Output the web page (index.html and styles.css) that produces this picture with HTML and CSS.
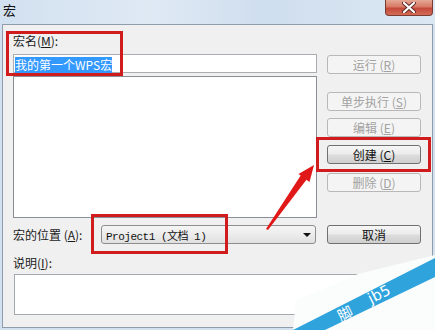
FILE: index.html
```html
<!DOCTYPE html>
<html lang="zh-CN">

<head>
    <meta charset="UTF-8">
    <title>宏</title>
    <link rel="stylesheet" href="styles.css">
</head>

<body>
    <div class="window">
        <div class="titlebar">
            <span class="title">宏</span>
            <span class="close">
                <svg width="16" height="11" viewBox="0 0 16 11">
                    <path d="M3 1 L13 10 M13 1 L3 10" stroke="#5a2a22" stroke-width="4" stroke-linecap="round" />
                    <path d="M3 1 L13 10 M13 1 L3 10" stroke="#fff" stroke-width="2.2" stroke-linecap="round" />
                </svg>
            </span>
        </div>

        <div class="client">
            <div class="top">
                <div class="left-col">
                    <div class="label">宏名(<u>M</u>):</div>
                    <div class="textbox"><span class="sel">我的第一个WPS宏</span></div>
                    <div class="listbox"></div>
                </div>
                <div class="right-col">
                    <div class="btn disabled run">运行 (<u>R</u>)</div>
                    <div class="btn disabled step">单步执行 (<u>S</u>)</div>
                    <div class="btn disabled edit">编辑 (<u>E</u>)</div>
                    <div class="btn create">创建 (<u>C</u>)</div>
                    <div class="btn disabled del">删除 (<u>D</u>)</div>
                </div>
            </div>

            <div class="loc-row">
                <div class="loc-label">宏的位置 (<u>A</u>):</div>
                <div class="combo">
                    <span class="combo-text">Project1 (文档 1)</span>
                    <span class="combo-arrow"></span>
                </div>
                <div class="btn cancel">取消</div>
            </div>

            <div class="label desc">说明(<u>I</u>):</div>
            <div class="memo"></div>
        </div>

        <!-- 标注框 -->
        <div class="mark mark-name"></div>
        <div class="mark mark-loc"></div>
        <div class="mark mark-create"></div>

        <svg class="overlay" width="435" height="330" viewBox="0 0 435 330">
            <polygon points="266,229 268,230 307,179 301,175" fill="#e01818" />
            <polygon points="314,165 309.5,182 298.5,174" fill="#e01818" />
            <!-- 水印 -->
            <polygon points="293,330 296,300 358,274 435,255 435,330" fill="#fbfdfd" />
            <polygon points="293,330 325,330 435,277 435,258" fill="#2ea3dc" />
            <text x="341" y="322" transform="rotate(-27 341 322)" class="wm">脚</text>
            <text x="371" y="304" transform="rotate(-27 371 304)" class="wm">jb5</text>
        </svg>
    </div>
</body>

</html>
```

FILE: styles.css
```css
body {
    margin: 0px;
    padding: 0px;
}

.window {
    position: relative;
    width: 435px;
    height: 330px;
    overflow: hidden;
    background: #d3e2f1;
    font-family: "Noto Sans CJK SC", "Liberation Sans", sans-serif;
    font-size: 12px;
    color: #1a1a1a;
}

u {
    text-decoration: underline;
}

.titlebar {
    display: flex;
    justify-content: space-between;
    align-items: flex-start;
    height: 24px;
    background: linear-gradient(90deg, #d2e1f0 0%, #dfe9f4 35%, #cfdeee 60%, #dbe7f3 100%);
}

.title {
    padding-left: 3px;
    line-height: 20px;
    font-size: 13px;
    color: #111;
}

.close {
    display: flex;
    align-items: center;
    justify-content: center;
    width: 46px;
    height: 15px;
    margin-right: 2px;
    border: 1px solid #7c3b31;
    border-top: none;
    border-radius: 0px 0px 4px 4px;
    background: linear-gradient(180deg, #e6a896 0%, #d77a66 45%, #c5483a 55%, #d26c58 100%);
}

.client {
    box-sizing: border-box;
    width: 431px;
    height: 304px;
    margin-left: 2px;
    padding: 8px 0px 0px 10px;
    border: 1px solid #8e9cab;
    background: #f0f0f0;
}

.top {
    display: flex;
}

.left-col {
    width: 304px;
}

.label {
    height: 21px;
    line-height: 16px;
}

.textbox {
    box-sizing: border-box;
    height: 19px;
    padding: 1px;
    border: 1px solid #abadb3;
    background: #fff;
}

.sel {
    display: inline-block;
    line-height: 16px;
    background: #3399ff;
    color: #fff;
}

.listbox {
    box-sizing: border-box;
    height: 142px;
    margin-top: 3px;
    border: 1px solid #8a8f97;
    background: #fff;
}

.right-col {
    display: flex;
    flex-direction: column;
    width: 94px;
    margin-left: 10px;
}

.btn {
    box-sizing: border-box;
    width: 94px;
    height: 19px;
    line-height: 17px;
    text-align: center;
    border: 1px solid #707070;
    border-radius: 3px;
    background: linear-gradient(180deg, #f6f6f6 0%, #ebebeb 48%, #dddddd 52%, #cfcfcf 100%);
    color: #111;
}

.btn.disabled {
    border-color: #b8b8b8;
    background: #f4f4f4;
    color: #a2a2a2;
}

.run {
    margin-top: 22px;
}

.step {
    margin-top: 18px;
}

.edit {
    margin-top: 7px;
}

.create {
    margin-top: 8px;
}

.del {
    margin-top: 9px;
}

.loc-row {
    display: flex;
    align-items: center;
    height: 20px;
    margin-top: 6px;
}

.loc-label {
    width: 88px;
}

.combo {
    box-sizing: border-box;
    display: flex;
    align-items: center;
    justify-content: space-between;
    width: 215px;
    height: 19px;
    margin-top: 1px;
    padding: 0px 4px 0px 4px;
    border: 1px solid #8e8e8e;
    border-radius: 3px;
    background: linear-gradient(180deg, #f5f5f5 0%, #ececec 50%, #e0e0e0 100%);
}

.combo-text {
    font-family: "Liberation Mono", "Noto Sans CJK SC", monospace;
    font-size: 11px;
    letter-spacing: -0.5px;
    color: #111;
}

.combo-arrow {
    width: 0px;
    height: 0px;
    border-left: 4px solid transparent;
    border-right: 4px solid transparent;
    border-top: 4px solid #111;
}

.cancel {
    margin-left: 11px;
}

.desc {
    height: 16px;
    margin-top: 11px;
}

.memo {
    box-sizing: border-box;
    width: 407px;
    height: 41px;
    margin-top: 3px;
    margin-left: 1px;
    border: 1px solid #a5a9b0;
    background: #fff;
}

/* 红色标注 */
.mark {
    position: absolute;
    box-sizing: border-box;
    border: 3px solid #d01c1c;
}

.mark-name {
    left: 6px;
    top: 31px;
    width: 117px;
    height: 45px;
}

.mark-loc {
    left: 91px;
    top: 214px;
    width: 137px;
    height: 40px;
}

.mark-create {
    left: 316px;
    top: 137px;
    width: 115px;
    height: 35px;
}

.overlay {
    position: absolute;
    left: 0px;
    top: 0px;
    pointer-events: none;
}

.wm {
    fill: #fff;
    font-family: "DejaVu Sans", "Noto Sans CJK SC", sans-serif;
    font-size: 15px;
}
```
